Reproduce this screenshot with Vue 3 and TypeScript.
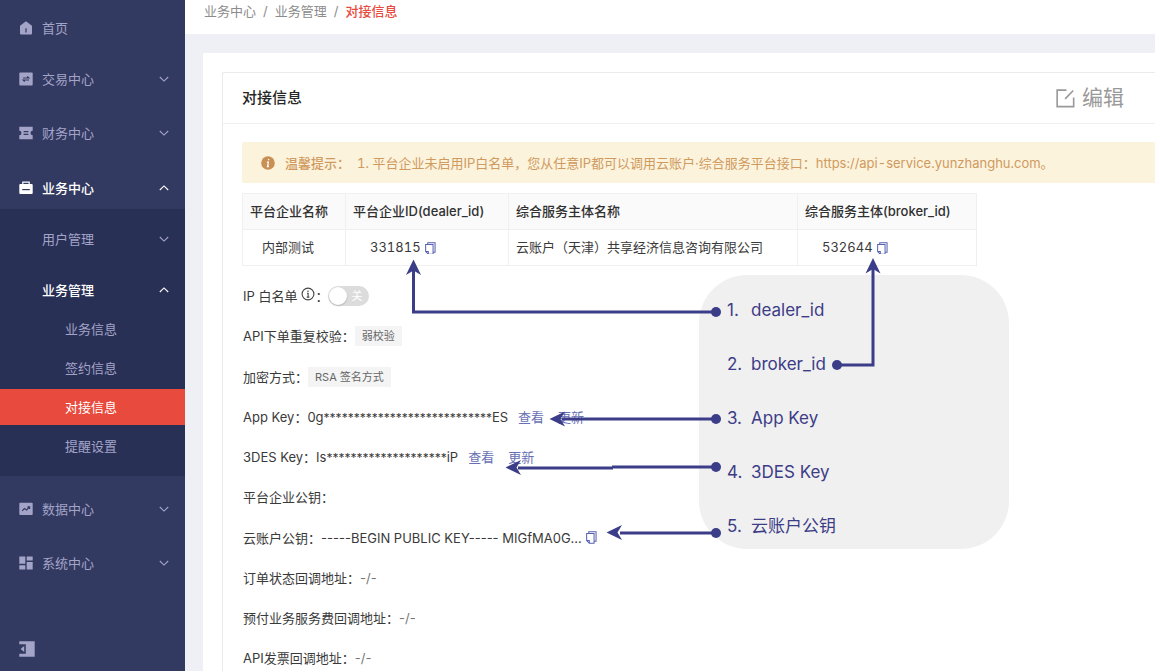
<script setup lang="ts">
import { ref } from 'vue'

interface TopItem {
  icon: string
  label: string
  expandable: boolean
  open?: boolean
}

const topItems: TopItem[] = [
  { icon: 'home', label: '首页', expandable: false },
  { icon: 'trade', label: '交易中心', expandable: true },
  { icon: 'finance', label: '财务中心', expandable: true },
  { icon: 'business', label: '业务中心', expandable: true, open: true },
  { icon: 'data', label: '数据中心', expandable: true },
  { icon: 'system', label: '系统中心', expandable: true },
]

const leaves: string[] = ['业务信息', '签约信息', '对接信息', '提醒设置']
const current = '对接信息'

const whitelist = ref<boolean>(false)

const notes: string[] = ['dealer_id', 'broker_id', 'App Key', '3DES Key', '云账户公钥']

interface MaskedKey {
  label: string
  head: string
  masked: number
  tail: string
}

const keys: MaskedKey[] = [
  { label: 'App Key', head: '0g', masked: 28, tail: 'ES' },
  { label: '3DES Key', head: 'Is', masked: 20, tail: 'iP' },
]
</script>

<template>
  <div class="shell">
    <nav class="sidebar" aria-label="主菜单">
      <ul class="menu">
        <li v-for="item in topItems" :key="item.label" :class="['entry', item.icon]">
          <button type="button" :class="['row', { active: item.open }]">
            <svg class="icon" viewBox="0 0 14 14" aria-hidden="true">
              <path v-if="item.icon === 'home'" fill-rule="evenodd" d="M7 0.3 L13 4.8 V12.6 Q13 13.6 12 13.6 H2 Q1 13.6 1 12.6 V4.8 Z M6.4 7.2 V11.6 H7.6 V7.2 Z" />
              <template v-else-if="item.icon === 'trade'">
                <rect x="0.3" y="0.5" width="13.4" height="13" rx="1" />
                <path class="cut" d="M4 6 H9.8 L8.2 4.5 M10 8 H4.2 L5.8 9.500" />
              </template>
              <template v-else-if="item.icon === 'finance'">
                <path d="M0.3 0.8 H13.7 V4.8 A2.2 2.2 0 0 0 13.7 9.2 V13.2 H0.3 V9.2 A2.2 2.2 0 0 0 0.3 4.8 Z" />
                <path class="cut" d="M4.6 5.6 H9.4 M4.6 8.4 H9.4" />
              </template>
              <template v-else-if="item.icon === 'business'">
                <path fill-rule="evenodd" d="M3.2 0.5 H10.8 V3 H12.7 Q13.7 3 13.7 4 V12 Q13.7 13 12.7 13 H1.3 Q0.3 13 0.3 12 V4 Q0.3 3 1.3 3 H3.2 Z M4.4 1.7 V3 H9.6 V1.7 Z" />
                <path class="cut" d="M3.2 8.6 H10.8" />
              </template>
              <template v-else-if="item.icon === 'data'">
                <rect x="0.3" y="0.8" width="13.4" height="12.2" rx="1" />
                <path class="cut" d="M3.2 8.8 L5.4 6.6 L7.6 7.9 L10.4 5 M8.4 4.9 H10.6 V7" />
              </template>
              <path v-else d="M0.3 0.5 H6.3 V7.8 H0.3 Z M7.7 0.5 H13.7 V4.6 H7.7 Z M0.3 9.2 H6.3 V13.5 H0.3 Z M7.7 6 H13.7 V13.5 H7.7 Z" />
            </svg>
            <span>{{ item.label }}</span>
            <svg v-if="item.expandable" class="chevron" viewBox="0 0 10 6" aria-hidden="true">
              <path :d="item.open ? 'M0.8 5 L5 0.9 L9.2 5' : 'M0.8 1 L5 5.1 L9.2 1'" />
            </svg>
          </button>

          <ul v-if="item.open" class="submenu">
            <li>
              <button type="button" class="row sub">
                <span>用户管理</span>
                <svg class="chevron" viewBox="0 0 10 6" aria-hidden="true"><path d="M0.8 1 L5 5.1 L9.2 1" /></svg>
              </button>
            </li>
            <li>
              <button type="button" class="row sub active">
                <span>业务管理</span>
                <svg class="chevron" viewBox="0 0 10 6" aria-hidden="true"><path d="M0.8 5 L5 0.9 L9.2 5" /></svg>
              </button>
              <ul class="leaves">
                <li v-for="leaf in leaves" :key="leaf">
                  <a href="#" :class="['leaf', { current: leaf === current }]">{{ leaf }}</a>
                </li>
              </ul>
            </li>
          </ul>
        </li>
      </ul>
      <button type="button" class="collapse" aria-label="收起菜单">
        <svg viewBox="0 0 16 16" aria-hidden="true">
          <path fill-rule="evenodd" d="M0.3 0.3 H15.7 V15.7 H0.3 V12.8 H6.8 V3.2 H0.3 Z M5.2 4.9 V11.1 L1.6 8 Z" />
        </svg>
      </button>
    </nav>

    <main class="main">
      <nav class="crumbs" aria-label="面包屑">
        <a href="#">业务中心</a><span class="slash">/</span><a href="#">业务管理</a><span class="slash">/</span><span class="here">对接信息</span>
      </nav>

      <div class="panel">
        <section class="card">
          <header class="card-head">
            <h1>对接信息</h1>
            <button type="button" class="edit">
              <svg viewBox="0 0 20 20" aria-hidden="true">
                <path d="M11 1.2 H1.2 V18.6 H18.6 V9 M9.6 10.4 L18.2 1.6" />
              </svg>
              <span>编辑</span>
            </button>
          </header>

          <div class="card-body">
            <div class="alert" role="note">
              <svg viewBox="0 0 14 14" aria-hidden="true">
                <circle cx="7" cy="7" r="6.8" />
                <path d="M7.6 2.9 V4.2 M5.9 6.2 H7.4 L6.5 10.5 H8" />
              </svg>
              <strong>温馨提示：</strong>
              <span>1. 平台企业未启用IP白名单，您从任意IP都可以调用云账户·综合服务平台接口：https://api-service.yunzhanghu.com。</span>
            </div>

            <table class="ids">
              <colgroup><col class="c1" /><col class="c2" /><col class="c3" /><col class="c4" /></colgroup>
              <thead>
                <tr>
                  <th scope="col">平台企业名称</th>
                  <th scope="col">平台企业ID(dealer_id)</th>
                  <th scope="col">综合服务主体名称</th>
                  <th scope="col">综合服务主体(broker_id)</th>
                </tr>
              </thead>
              <tbody>
                <tr>
                  <td class="name">内部测试</td>
                  <td class="num">331815<button type="button" class="copy" aria-label="复制 dealer_id"><svg viewBox="0 0 12 14" aria-hidden="true"><path d="M3 2.8 V0.7 H11 V11.2 H8.8 M0.7 2.8 H8.8 V13.3 H3.6 L0.7 10.4 Z M0.9 10.4 H3.6 V13.1" /></svg></button></td>
                  <td>云账户（天津）共享经济信息咨询有限公司</td>
                  <td class="num">532644<button type="button" class="copy" aria-label="复制 broker_id"><svg viewBox="0 0 12 14" aria-hidden="true"><path d="M3 2.8 V0.7 H11 V11.2 H8.8 M0.7 2.8 H8.8 V13.3 H3.6 L0.7 10.4 Z M0.9 10.4 H3.6 V13.1" /></svg></button></td>
                </tr>
              </tbody>
            </table>

            <div class="fields">
              <div class="field tall">
                <label for="whitelist">IP 白名单</label>
                <svg class="info" viewBox="0 0 14 14" aria-hidden="true">
                  <circle cx="7" cy="7" r="5.9" />
                  <path d="M7 3.6 V4.9 M6 6.2 H7.1 V10.1 M5.8 10.1 H8.4" />
                </svg>
                <span>：</span>
                <span class="switch">
                  <input id="whitelist" v-model="whitelist" type="checkbox" role="switch" />
                  <span class="state">{{ whitelist ? '开' : '关' }}</span>
                </span>
              </div>
              <div class="field"><span>API下单重复校验：</span><span class="tag">弱校验</span></div>
              <div class="field tall"><span>加密方式：</span><span class="tag">RSA 签名方式</span></div>
              <div v-for="k in keys" :key="k.label" class="field">
                <span>{{ k.label }}：</span><span>{{ k.head }}<span class="stars">{{ '*'.repeat(k.masked) }}</span>{{ k.tail }}</span><a href="#">查看</a><a href="#">更新</a>
              </div>
              <div class="field"><span>平台企业公钥：</span></div>
              <div class="field tall"><span>云账户公钥：</span><span>-----BEGIN PUBLIC KEY----- MIGfMA0G...</span><button type="button" class="copy" aria-label="复制公钥"><svg viewBox="0 0 12 14" aria-hidden="true"><path d="M3 2.8 V0.7 H11 V11.2 H8.8 M0.7 2.8 H8.8 V13.3 H3.6 L0.7 10.4 Z M0.9 10.4 H3.6 V13.1" /></svg></button></div>
              <div class="field"><span>订单状态回调地址：</span><span class="none">-/-</span></div>
              <div class="field"><span>预付业务服务费回调地址：</span><span class="none">-/-</span></div>
              <div class="field"><span>API发票回调地址：</span><span class="none">-/-</span></div>
            </div>
          </div>
        </section>
      </div>
    </main>

    <aside class="notes">
      <ol>
        <li v-for="(note, i) in notes" :key="note"><span class="index">{{ i + 1 }}.</span><span>{{ note }}</span></li>
      </ol>
    </aside>
    <svg class="arrows" viewBox="400 250 500 300" aria-hidden="true">
      <path class="line" d="M716 312 H413.500 V268" />
      <path class="line" d="M837 365 H873 V266" />
      <path class="line" d="M716 419 H562" />
      <path class="line" d="M716 467 H612 M613 468 H518" />
      <path class="line" d="M716 533 H620" />
      <path d="M413.500 259.500 L421 275 L413.500 270.500 L406 275 Z" />
      <path d="M873 258 L880.500 273.500 L873 269 L865.500 273.500 Z" />
      <path d="M549.500 419 L565 411.500 L560.500 419 L565 426.500 Z" />
      <path d="M505.500 467.500 L521 460 L516.500 467.500 L521 475 Z" />
      <path d="M606.500 532.500 L622 525 L617.500 532.500 L622 540 Z" />
      <circle cx="716" cy="312" r="5" />
      <circle cx="837" cy="365" r="5" />
      <circle cx="716" cy="419" r="5" />
      <circle cx="716" cy="467" r="5" />
      <circle cx="716" cy="533" r="5" />
    </svg>
  </div>
</template>

<style>
body {
  margin: 0;
  background: #fff;
}
</style>

<style scoped>
* {
  box-sizing: border-box;
}

.shell {
  position: relative;
  display: flex;
  height: 100vh;
  padding: 0 5px 1px 0;
  overflow: hidden;
  color: #3a3a3a;
  font: 13px/20px Inter, "Noto Sans CJK SC", sans-serif;
}

ul,
ol {
  margin: 0;
  padding: 0;
  list-style: none;
}

button {
  margin: 0;
  padding: 0;
  border: 0;
  background: none;
  color: inherit;
  font: inherit;
  cursor: pointer;
}

a {
  color: inherit;
  text-decoration: none;
}

/* Sidebar */
.sidebar {
  display: flex;
  flex: 0 0 185px;
  flex-direction: column;
  justify-content: space-between;
  padding: 6px 0 14px;
  background: #333a61;
  color: #a3a4c8;
}

.menu {
  display: flex;
  flex-direction: column;
  gap: 11px;
}

.entry.home {
  margin-bottom: -3px;
}

.entry.business {
  margin-top: 1px;
}

.row {
  display: flex;
  align-items: center;
  width: 100%;
  height: 43px;
  padding: 0 16px 0 19px;
  text-align: left;
}

.row.sub {
  height: 36px;
  padding-left: 42px;
}

.row.active {
  color: #fff;
  font-weight: 500;
}

.icon {
  width: 14px;
  height: 14px;
  margin-right: 9px;
  fill: currentColor;
}

.cut {
  fill: none;
  stroke: #333a61;
  stroke-width: 1.2;
}

.chevron {
  width: 10px;
  height: 6px;
  margin-left: auto;
  fill: none;
  stroke: currentColor;
  stroke-width: 1.1;
}

.submenu {
  display: flex;
  flex-direction: column;
  gap: 15px;
  padding: 12px 0;
  background: #293056;
}

.leaves {
  display: flex;
  flex-direction: column;
  gap: 3px;
  margin-top: 3px;
}

.leaf {
  display: block;
  padding-left: 65px;
  line-height: 36px;
}

.leaf.current {
  background: #e84a3d;
  color: #fff;
}

.collapse {
  width: 16px;
  height: 16px;
  margin-left: 19px;
}

.collapse svg {
  display: block;
  fill: currentColor;
}

/* Content */
.main {
  flex: 1;
  min-width: 0;
  overflow: hidden;
  background: #eff0f5;
}

.crumbs {
  height: 34px;
  padding: 1px 19px;
  background: #fff;
  color: #8c8c8c;
}

.slash {
  margin: 0 7px;
}

.here {
  color: #e84a3d;
  font-weight: 500;
}

.panel {
  margin: 19px 0 0 18px;
  padding: 19px 0 0 19px;
  background: #fff;
}

.card {
  border: 1px solid #ebebeb;
  border-right: 0;
  border-radius: 2px 0 0 0;
}

.card-head {
  display: flex;
  align-items: center;
  justify-content: space-between;
  height: 51px;
  padding: 0 31px 0 19px;
  border-bottom: 1px solid #f0f0f0;
}

h1 {
  margin: 0;
  color: #262626;
  font-size: 15px;
  font-weight: 500;
}

.edit {
  display: flex;
  align-items: center;
  gap: 7px;
  color: #999;
  font-size: 21px;
}

.edit svg {
  width: 19px;
  height: 19px;
  fill: none;
  stroke: currentColor;
  stroke-width: 1.7;
}

.card-body {
  padding: 18px 0 19px 19px;
}

.alert {
  display: flex;
  align-items: center;
  height: 41px;
  padding-left: 19px;
  border-radius: 2px 0 0 2px;
  background: #fbf3dc;
  color: #d09a5f;
  font-variant-numeric: tabular-nums;
  white-space: nowrap;
}

.alert svg {
  width: 14px;
  height: 14px;
  margin-right: 10px;
  fill: #c98f53;
}

.alert svg path {
  fill: none;
  stroke: #fff;
  stroke-width: 1.3;
}

.alert strong {
  margin-right: 7px;
  font-weight: 500;
}

.ids {
  width: 735px;
  margin-top: 10px;
  border-collapse: collapse;
  table-layout: fixed;
}

.c1 {
  width: 103px;
}

.c2 {
  width: 163px;
}

.c3 {
  width: 289px;
}

.ids th,
.ids td {
  height: 36px;
  padding: 0 7px 2px;
  border: 1px solid #f0f0f0;
  text-align: left;
  white-space: nowrap;
}

.ids th {
  background: #fafafa;
  color: #303030;
  font-weight: 500;
}

.ids .name {
  padding-left: 19px;
}

.ids .num {
  padding-left: 24px;
  font-variant-numeric: tabular-nums;
}

.copy {
  width: 11px;
  height: 13px;
  margin-left: 4px;
  vertical-align: middle;
}

.copy svg {
  display: block;
  fill: none;
  stroke: #5660b0;
  stroke-width: 1.1;
}

.fields {
  margin-top: 9px;
}

.field {
  display: flex;
  align-items: center;
  height: 40px;
  padding-left: 1px;
  white-space: nowrap;
}

.field.tall {
  height: 41px;
}

.field a {
  margin-left: 10px;
  color: #6870b5;
}

.field a + a {
  margin-left: 14px;
}

.stars {
  font-size: 12px;
}

.info {
  width: 14px;
  height: 14px;
  margin: 0 0 4px 4px;
  fill: none;
  stroke: #444;
  stroke-width: 1.1;
}

.switch {
  position: relative;
  display: inline-flex;
}

.switch input {
  width: 41px;
  height: 20px;
  margin: 0;
  border-radius: 10px;
  appearance: none;
  background: #dcdcdc;
}

.switch input::before {
  display: block;
  width: 18px;
  height: 18px;
  margin: 1px;
  border-radius: 50%;
  background: #fff;
  box-shadow: 0 1px 2px rgba(0, 0, 0, 0.2);
  content: "";
}

.switch input:checked::before {
  margin-left: 22px;
}

.state {
  position: absolute;
  right: 7px;
  color: #fff;
  font-size: 11px;
  pointer-events: none;
}

.tag {
  padding: 0 7px;
  background: #f4f4f4;
  color: #666;
  font-size: 11px;
}

.none {
  color: #777;
}

/* Callouts */
.notes {
  position: absolute;
  top: 275px;
  left: 699px;
  width: 310px;
  padding: 23px 28px 11px;
  border-radius: 48px;
  background: #f0f0f0;
  color: #3c3c87;
  font-size: 17px;
  line-height: 24px;
}

.notes ol {
  display: flex;
  flex-direction: column;
  gap: 30px;
}

.notes li {
  display: flex;
}

.index {
  width: 24px;
}

.arrows {
  position: absolute;
  top: 250px;
  left: 400px;
  width: 500px;
  height: 300px;
  fill: #3b3d88;
  pointer-events: none;
}

.line {
  fill: none;
  stroke: #3b3d88;
  stroke-width: 3;
}
</style>
